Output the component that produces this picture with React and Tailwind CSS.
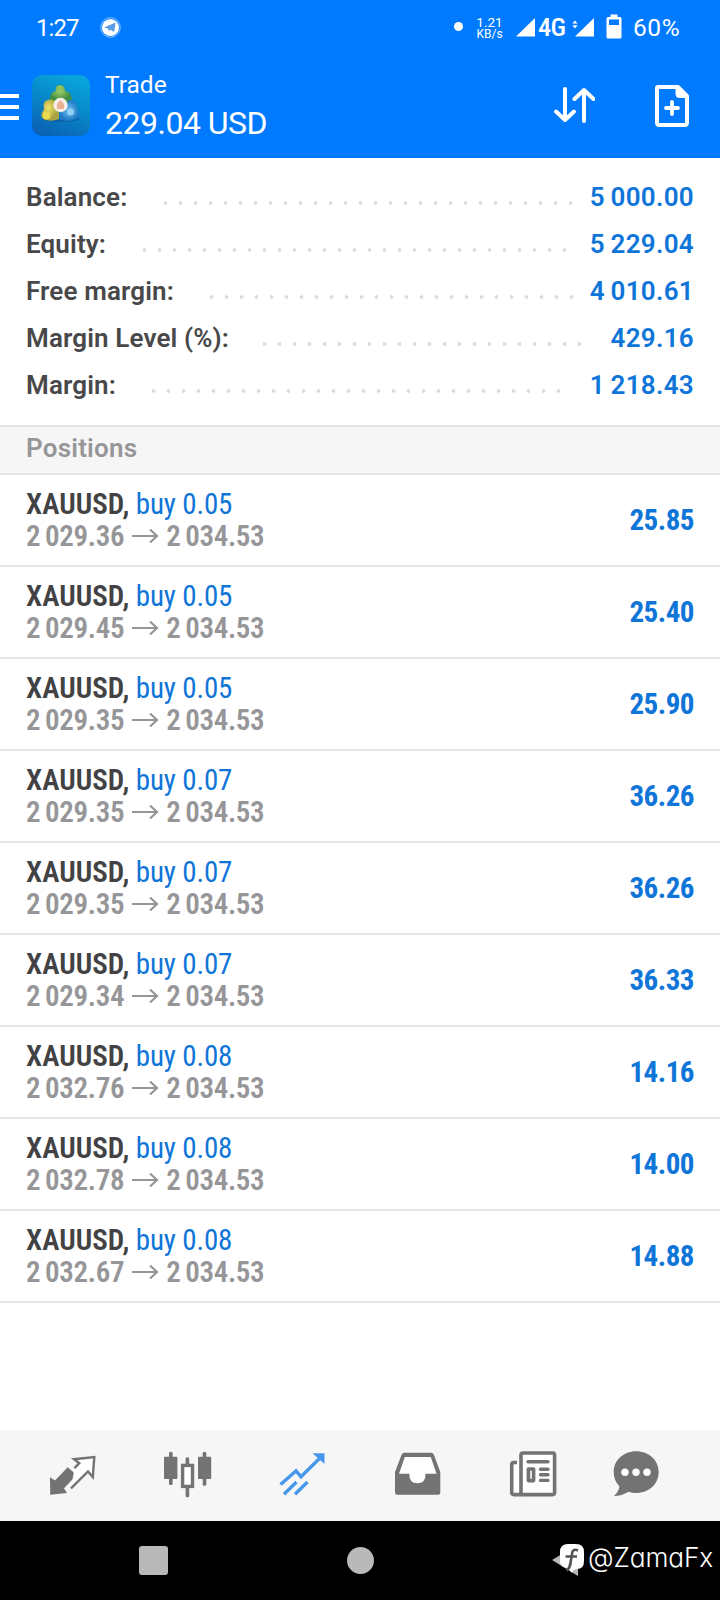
const summary = [
  { label: 'Balance:', value: '5 000.00', width: 'w-[132px]', leader: 'w-[420px]' },
  { label: 'Equity:', value: '5 229.04', width: 'w-[111px]', leader: 'w-[435px]' },
  { label: 'Free margin:', value: '4 010.61', width: 'w-[178px]', leader: 'w-[375px]' },
  { label: 'Margin Level (%):', value: '429.16', width: 'w-[231px]', leader: 'w-[330px]' },
  { label: 'Margin:', value: '1 218.43', width: 'w-[120px]', leader: 'w-[420px]' },
]

const positions = [
  { id: 1, volume: '0.05', open: '2 029.36', profit: '25.85' },
  { id: 2, volume: '0.05', open: '2 029.45', profit: '25.40' },
  { id: 3, volume: '0.05', open: '2 029.35', profit: '25.90' },
  { id: 4, volume: '0.07', open: '2 029.35', profit: '36.26' },
  { id: 5, volume: '0.07', open: '2 029.35', profit: '36.26' },
  { id: 6, volume: '0.07', open: '2 029.34', profit: '36.33' },
  { id: 7, volume: '0.08', open: '2 032.76', profit: '14.16' },
  { id: 8, volume: '0.08', open: '2 032.78', profit: '14.00' },
  { id: 9, volume: '0.08', open: '2 032.67', profit: '14.88' },
]

const currentPrice = '2 034.53'

function StatusBar() {
  return (
    <div className="flex h-[55px] items-center justify-between pl-[36px] pr-[38px]">
      <div className="flex items-center gap-[21px]">
        <span className="w-[43px] text-[24px] tracking-[-0.9px]">1:27</span>
        <svg width="21" height="21" viewBox="0 0 21 21">
          <circle cx="10.5" cy="10.5" r="9.8" fill="none" stroke="#8cc4ff" strokeWidth="1" />
          <circle cx="10.5" cy="10.5" r="8.6" fill="#fff" />
          <path d="M4 10.6 L15.6 5.4 L14.2 15 L10.4 12.8 L8.8 14.2 L8 11.6 Z" fill="#5a9fe6" />
        </svg>
      </div>

      <div className="flex items-center">
        <span className="mr-[13px] mb-[2px] size-[9px] rounded-full bg-white" />
        <div className="w-[27px] text-center leading-[12px] whitespace-nowrap">
          <p className="text-[13.5px]">1.21</p>
          <p className="text-[12px]">KB/s</p>
        </div>
        <svg className="ml-[13px]" width="19" height="19" viewBox="0 0 19 19">
          <path d="M19 0 V18.5 H0 Z" fill="#fff" />
        </svg>
        <span className="ml-[3px] w-[28px] font-['Roboto_Condensed'] text-[26.5px] font-medium leading-none tracking-[-0.8px]">4G</span>
        <svg className="ml-[6px]" width="22" height="19" viewBox="0 0 22 19">
          <path d="M22 0 V18.5 H3 Z" fill="#fff" />
          <path d="M0.4 5.6 L3 2.4 L5.6 5.6 Z M0.4 7.2 L3 10.4 L5.6 7.2 Z" fill="#fff" />
        </svg>
        <svg className="ml-[12px] mb-[3px]" width="16" height="25" viewBox="0 0 16 25">
          <path d="M4.5 0.5 H11.5 V3 H14 Q15.5 3 15.5 4.5 V23 Q15.5 24.5 14 24.5 H2 Q0.5 24.5 0.5 23 V4.5 Q0.5 3 2 3 H4.5 Z" fill="#fff" />
          <rect x="3" y="5.5" width="10" height="5.5" fill="#007aff" />
        </svg>
        <span className="mt-[2px] ml-[11px] w-[49px] text-[24.5px] tracking-[0.6px]">60%</span>
      </div>
    </div>
  )
}

function AppLogo() {
  return (
    <svg width="58" height="62" viewBox="0 0 58 62">
      <defs>
        <linearGradient id="tile" x1="0.7" y1="0" x2="0.3" y2="1">
          <stop offset="0" stopColor="#08a5dc" />
          <stop offset="0.5" stopColor="#0887c8" />
          <stop offset="1" stopColor="#0a62b4" />
        </linearGradient>
        <radialGradient id="green" cx="0.45" cy="0.3">
          <stop offset="0" stopColor="#a4cf66" />
          <stop offset="1" stopColor="#3f8f45" />
        </radialGradient>
        <radialGradient id="gold" cx="0.4" cy="0.4">
          <stop offset="0" stopColor="#f0e36a" />
          <stop offset="1" stopColor="#a9a440" />
        </radialGradient>
        <radialGradient id="sky" cx="0.5" cy="0.5">
          <stop offset="0" stopColor="#6fc1ee" />
          <stop offset="1" stopColor="#1d78c4" />
        </radialGradient>
      </defs>
      <rect width="58" height="61" rx="10" fill="url(#tile)" />
      <ellipse cx="29" cy="44" rx="19" ry="3" fill="#08508f" opacity="0.5" />
      <path d="M28 10 C32 10 33 13 33 16 C38 17 41 21 40 29 L18 29 C17 21 19 17 24 16 C23 13 24 10 28 10 Z" fill="url(#green)" />
      <path d="M16 25 C20 23 25 26 27 33 L27 44 C20 47 10 46 9.5 41 C9 37 12 36 12 33 C11 29 12 26 16 25 Z" fill="url(#gold)" />
      <circle cx="14.5" cy="40.5" r="4" fill="#e9d94f" />
      <path d="M37 25 C42 24 45 28 45 34 C48 37 48 42 44 44 C38 47 30 46 27 44 L28 33 C30 31 35 29 37 25 Z" fill="url(#sky)" />
      <circle cx="38.5" cy="37" r="3.5" fill="#8fd2f5" />
      <circle cx="28" cy="13.5" r="3" fill="#8dc35c" />
      <circle cx="28.5" cy="30" r="7.2" fill="#f8eee8" />
      <path d="M28.5 25 L32 29 V34 H25 V29 Z" fill="#e9b294" />
    </svg>
  )
}

function Header() {
  return (
    <header className="h-[158px] bg-[#007aff] text-white">
      <StatusBar />
      <div className="flex h-[103px] items-center">
        <div className="mt-px flex w-[19px] flex-col gap-[6.5px]">
          <span className="h-[4.5px] bg-white" />
          <span className="h-[4.5px] bg-white" />
          <span className="h-[4.5px] bg-white" />
        </div>
        <div className="-mt-[2px] ml-[13px]">
          <AppLogo />
        </div>
        <div className="-mt-[5px] ml-[15px] flex-1">
          <h1 className="text-[24.5px] leading-[38px]">Trade</h1>
          <p className="text-[32px] leading-[39px] tracking-[-0.5px]">229.04 USD</p>
        </div>
        <svg className="-mt-[3px]" width="42" height="38" viewBox="0 0 42 38" fill="none" stroke="#fff" strokeWidth="4" strokeLinecap="round" strokeLinejoin="round">
          <path d="M12 3 V34 M3 25.5 L12 34 L21 25.5" />
          <path d="M31 35 V4 M21.5 13 L31 4 L40.5 13" />
        </svg>
        <svg className="-mt-[2px] mr-[30px] ml-[58px]" width="37" height="44" viewBox="0 0 37 44" fill="none" stroke="#fff" strokeLinecap="round" strokeLinejoin="round">
          <path d="M5 3 H25 L34 12 V38.5 Q34 41 31.5 41 H6.5 Q4 41 4 38.5 V4 Q4 3 5 3 Z" strokeWidth="4" />
          <path d="M24 3 L34 12.5 H27 Q24 12.5 24 9.5 Z" fill="#fff" strokeWidth="3" />
          <path d="M19 18 V30 M13 24 H25" strokeWidth="3.8" />
        </svg>
      </div>
    </header>
  )
}

function Summary() {
  return (
    <section className="px-[26px] pt-[16px] pb-[16px]">
      {summary.map((s) => (
        <div key={s.label} className="flex h-[47px] items-center text-[26px]">
          <span className={`${s.width} shrink-0 font-[580] tracking-[0.13px] whitespace-nowrap text-[#48484a]`}>{s.label}</span>
          <span
            className={`${s.leader} mt-[10px] h-[6px] shrink-0 bg-[radial-gradient(circle,#dcdcde_1.4px,transparent_2.2px)] bg-[length:15px_6px]`}
          />
          <span className="ml-auto font-semibold tracking-[0.3px] whitespace-nowrap text-[#0f75d8] [word-spacing:-1px]">{s.value}</span>
        </div>
      ))}
    </section>
  )
}

function Position({ position }) {
  return (
    <li className="flex h-[92px] items-center justify-between border-b-2 border-[#e5e5e7] px-[26px] font-['Roboto_Condensed',sans-serif] text-[29px]">
      <div className="leading-[32px]">
        <p className="tracking-[-0.15px] text-[#0f75d8]">
          <span className="font-semibold tracking-[0.02px] text-[#424244]">XAUUSD,</span> buy {position.volume}
        </p>
        <p className="flex items-center font-semibold tracking-[-0.35px] text-[#969698] [word-spacing:-1.5px]">
          {position.open}
          <svg className="mr-[7px] ml-[8px]" width="27" height="16" viewBox="0 0 27 16" fill="none" stroke="#969698" strokeWidth="2.2">
            <path d="M0 8 H25 M18 1.5 L25 8 L18 14.5" />
          </svg>
          {currentPrice}
        </p>
      </div>
      <span className="mt-px font-bold tracking-[-0.5px] text-[#0f75d8]">{position.profit}</span>
    </li>
  )
}

function TabBar() {
  return (
    <nav className="flex h-[91px] bg-[#f6f6f6] pt-[20px] pl-[49px] text-[#737373]">
      {/* Quotes */}
      <svg className="mr-[67px]" width="48" height="48" viewBox="0 0 48 48">
        <path d="M1 27.3 L6 30.5 L18.7 17.3 L27.7 25 L15 38.3 L18 43 L1.2 44.7 Z" fill="currentColor" />
        <path d="M25.5 18.2 L30.3 13.2 L25 9.2 L45.3 7 L43.8 27 L39 21.5 L22 38.3" fill="#fff" stroke="currentColor" strokeWidth="2.4" />
      </svg>
      {/* Chart */}
      <svg className="mr-[67px]" width="48" height="48" viewBox="0 0 48 48" fill="currentColor">
        <rect x="0" y="6.7" width="13.4" height="22.3" rx="1" />
        <rect x="5" y="1.7" width="3.6" height="33.3" rx="1.5" />
        <rect x="21.6" y="7.3" width="3.6" height="40" rx="1.5" />
        <rect x="18.6" y="15.4" width="9.9" height="21" fill="#fff" stroke="currentColor" strokeWidth="3.4" />
        <rect x="34" y="6.7" width="13.2" height="22.3" rx="1" />
        <rect x="38.7" y="1.7" width="3.6" height="34" rx="1.5" />
      </svg>
      {/* Trade */}
      <svg className="mr-[67px] text-[#4698ec]" width="48" height="48" viewBox="0 0 48 48" fill="none" stroke="currentColor" strokeWidth="3.4">
        <path d="M1.5 34.5 L17 21 L22 26.7 L42 7" />
        <path d="M33.5 3.3 H45.5 V14 Z" fill="currentColor" stroke="none" />
        <path d="M5 44.3 L17.5 32 M16 44.3 L28.5 32" />
      </svg>
      {/* History */}
      <svg className="mr-[67px]" width="48" height="48" viewBox="0 0 48 48">
        <path d="M10.5 2.7 H37 Q39.3 2.7 40 5 L46.3 22 V42.5 Q46.3 44.7 44 44.7 H3.3 Q1 44.7 1 42.5 V22 L7.5 5 Q8.3 2.7 10.5 2.7 Z" fill="currentColor" />
        <path d="M10.8 7 H36.8 L42.5 23.7 H31.5 Q31.8 33.3 23.4 33.3 Q15 33.3 15.3 23.7 H5 Z" fill="#fff" />
      </svg>
      {/* News */}
      <svg className="mr-[55px]" width="48" height="48" viewBox="0 0 48 48" fill="none" stroke="currentColor" strokeWidth="3.6" strokeLinejoin="round">
        <path d="M8 12.5 H4.5 Q2.7 12.5 2.7 14.5 V42.5 Q2.7 44.6 5 44.6 H12 V12.5" fill="#fff" stroke="none" />
        <path d="M8 12.5 H5 Q2.7 12.5 2.7 14.8 V42.3 Q2.7 44.6 5 44.6 H14" />
        <rect x="12" y="3" width="33.6" height="41.6" rx="2" fill="#fff" />
        <path d="M19 11.8 H39 M31.5 19.2 H39 M31.5 24.8 H39 M31.5 30.4 H39" strokeWidth="3.4" strokeLinecap="round" />
        <rect x="19.4" y="19" width="5.2" height="11.6" strokeWidth="3.6" />
      </svg>
      {/* Chat */}
      <svg width="48" height="48" viewBox="0 0 48 48">
        <path d="M24.2 1.3 C37 1.3 46.7 10.5 46.7 22 C46.7 34 37 43 24.2 43 Q20 43 16.5 41.8 Q10 46 2 46 Q6.5 42 7.5 36.5 Q1.7 30.5 1.7 22 C1.7 10.5 11.5 1.3 24.2 1.3 Z" fill="currentColor" />
        <circle cx="13" cy="22.3" r="3.7" fill="#fff" />
        <circle cx="24" cy="22.3" r="3.7" fill="#fff" />
        <circle cx="35" cy="22.3" r="3.7" fill="#fff" />
      </svg>
    </nav>
  )
}

function SystemNav() {
  return (
    <div className="flex h-[79px] items-center bg-black text-white">
      <span className="ml-[139px] size-[29px] rounded-[3px] bg-[#b9b9b9]" />
      <span className="ml-[179px] size-[27px] rounded-full bg-[#b9b9b9]" />
      <svg className="ml-[178px]" width="36" height="36" viewBox="0 0 36 36">
        <path d="M0 17 L26 1.5 V33 Z" fill="#b9b9b9" />
        <path d="M16 1 H24 Q32 1 32 9 V18 Q32 26 25 26 Q21 26 20 30 Q17 26 15 25 Q8 24 8 18 V9 Q8 1 16 1 Z" fill="#fff" />
        <path d="M26 7.5 Q20.5 5 20 11 L18.5 20 Q18 25 14.5 27.5 M13.5 13.5 H25" fill="none" stroke="#555" strokeWidth="2.6" />
      </svg>
      <span className="-mt-[6px] font-[Inter,sans-serif] text-[26.3px] font-[350] tracking-[-0.1px] [font-feature-settings:'cv11']">@ZamaFx</span>
    </div>
  )
}

export default function App() {
  return (
    <div className="flex h-[1600px] w-[720px] flex-col overflow-hidden bg-white font-[Roboto,sans-serif]">
      <Header />
      <Summary />
      <h2 className="h-[50px] border-y-2 border-[#e5e5e7] bg-[#f6f6f6] px-[26px] text-[26px] leading-[43px] font-[580] tracking-[0.2px] text-[#969698]">
        Positions
      </h2>
      <ul className="flex-1">
        {positions.map((p) => (
          <Position key={p.id} position={p} />
        ))}
      </ul>
      <TabBar />
      <SystemNav />
    </div>
  )
}
